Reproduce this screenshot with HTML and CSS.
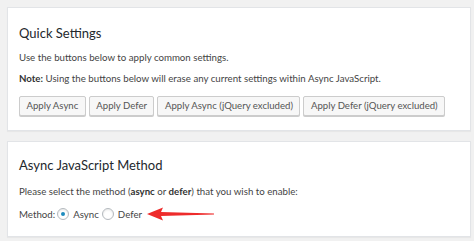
FILE: index.html
```html
<!DOCTYPE html>
<html>
<head>
<meta charset="utf-8">
<link rel="stylesheet" href="styles.css">
</head>
<body>
<div class="page">
  <div class="card card1">
    <h2 class="title">Quick Settings</h2>
    <p class="text p1">Use the buttons below to apply common settings.</p>
    <p class="text p2"><b>Note:</b> Using the buttons below will erase any current settings within Async JavaScript.</p>
    <div class="buttons">
      <span class="btn">Apply Async</span>
      <span class="btn">Apply Defer</span>
      <span class="btn">Apply Async (jQuery excluded)</span>
      <span class="btn">Apply Defer (jQuery excluded)</span>
    </div>
  </div>
  <div class="card card2">
    <h2 class="title">Async JavaScript Method</h2>
    <p class="text p3">Please select the method (<b>async</b> or <b>defer</b>) that you wish to enable:</p>
    <div class="method">
      <span class="label">Method:</span>
      <span class="radio checked"></span>
      <span class="opt">Async</span>
      <span class="radio"></span>
      <span class="opt">Defer</span>
      <svg class="arrow" width="68" height="14" viewBox="0 0 68 14">
        <path d="M0 7 L16 0.5 L14 5 L67 6.4 L67 7.6 L14 9 L16 13.5 Z" fill="#ee2b2b"/>
      </svg>
    </div>
  </div>
</div>
</body>
</html>
```
FILE: styles.css
```css
html, body { margin: 0; padding: 0; }
body {
  background: #f1f1f1;
  font-family: "Lato", "Open Sans", sans-serif;
  color: #444;
  width: 474px;
  height: 241px;
  overflow: hidden;
}
.page { padding: 7px 3px 0 7px; display: flex; flex-direction: column; gap: 10px; }
.card {
  background: #fff;
  border: 1px solid #e2e4e7;
  box-shadow: 0 1px 1px rgba(0,0,0,0.04);
  padding: 0 11px;
}
.card1 { height: 122px; }
.card2 { height: 94px; }
.title {
  margin: 0;
  font-size: 13px;
  font-weight: 400;
  color: #23282d;
  line-height: 20px;
  white-space: nowrap;
}
.card1 .title { padding-top: 15px; }
.card2 .title { padding-top: 13px; }
.text { margin: 0; font-size: 9.7px; line-height: 14px; white-space: nowrap; }
.text b { font-weight: 700; color: #333; }
.p1 { margin-top: 7px; }
.p2 { margin-top: 7px; }
.p3 { margin-top: 9px; }
.buttons { display: flex; gap: 3px; margin-top: 11px; }
.btn {
  flex: none;
  white-space: nowrap;
  font-size: 9.6px;
  color: #555;
  background: #f7f7f7;
  border: 1px solid #ccc;
  border-radius: 2px;
  box-shadow: 0 1px 0 #ccc;
  height: 18px;
  line-height: 18px;
  padding: 0 6.5px;
}
.method { display: flex; align-items: center; margin-top: 9px; font-size: 9.7px; height: 14px; }
.label { margin-right: 2px; }
.radio {
  width: 12px; height: 12px;
  border: 1px solid #b4b9be;
  border-radius: 50%;
  box-sizing: border-box;
  background: #fff;
  display: inline-flex;
  align-items: center;
  justify-content: center;
  margin-right: 4px;
  box-shadow: inset 0 1px 2px rgba(0,0,0,0.1);
}
.radio.checked::after {
  content: "";
  width: 4px; height: 4px;
  border-radius: 50%;
  background: #1e8cbe;
}
.opt { margin-right: 3px; }
.arrow { margin-left: 2px; }
```
